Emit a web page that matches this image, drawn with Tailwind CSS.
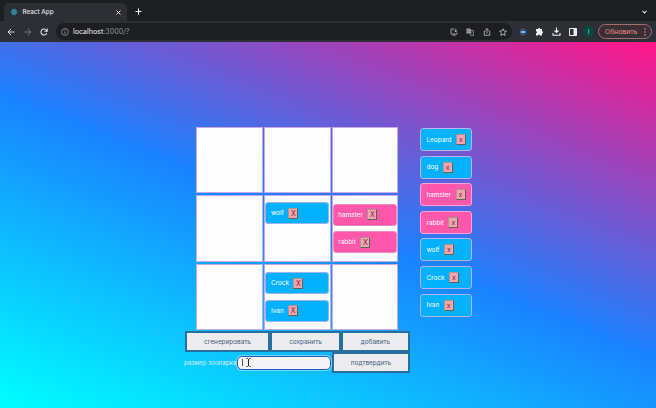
<!DOCTYPE html>
<html lang="ru">
<head>
<meta charset="utf-8">
<title>React App</title>
<script src="https://cdn.jsdelivr.net/npm/@tailwindcss/browser@4"></script>
</head>
<body class="w-[656px] h-[408px] overflow-hidden flex flex-col font-['Inter','Liberation_Sans',sans-serif] text-[6.4px] leading-none">
<header class="h-[42px] shrink-0 bg-[#1d1e22] text-[#e4e5e8]">
  <div class="h-[21px] flex items-end">
    <div class="relative ml-[4px] w-[123px] h-[18px] rounded-t-[5px] bg-[#2e2f34] flex items-center pl-[6px] pr-[6px]">
      <svg class="size-[8px] mr-[4.5px]" viewBox="0 0 16 16" fill="none" stroke="#3eaacb" stroke-width="1.2"><rect width="16" height="16" rx="3" fill="#20252b" stroke="none"/><ellipse cx="8" cy="8" rx="7" ry="2.8"/><ellipse cx="8" cy="8" rx="7" ry="2.8" transform="rotate(60 8 8)"/><ellipse cx="8" cy="8" rx="7" ry="2.8" transform="rotate(120 8 8)"/><circle cx="8" cy="8" r="1" fill="#3eaacb"/></svg>
      <span class="text-[6.3px] font-medium">React App</span>
      <svg class="size-[5px] ml-auto" viewBox="0 0 10 10" stroke="#eee" stroke-width="1.9"><path d="M1 1l8 8M9 1L1 9"/></svg>
    </div>
    <svg class="size-[7px] ml-[8px] mb-[6px]" viewBox="0 0 14 14" stroke="#f2f2f2" stroke-width="2.2"><path d="M7 1v12M1 7h12"/></svg>
    <svg class="w-[5px] h-[4px] ml-auto mr-[9px] mb-[7px]" viewBox="0 0 10 8" fill="none" stroke="#eee" stroke-width="2.2"><path d="M1 1.5l4 4.5 4-4.5"/></svg>
  </div>
  <div class="h-[21px] flex items-center bg-[#2e2f34]">
    <svg class="size-[8px] ml-[7px]" viewBox="0 0 16 16" fill="none" stroke="#e0e1e4" stroke-width="2"><path d="M15 8H2M8 2L2 8l6 6"/></svg>
    <svg class="size-[8px] ml-[9px]" viewBox="0 0 16 16" fill="none" stroke="#77787c" stroke-width="2"><path d="M1 8h13M8 2l6 6-6 6"/></svg>
    <svg class="size-[8px] ml-[8px]" viewBox="0 0 16 16" fill="none" stroke="#e0e1e4" stroke-width="2.1"><path d="M13.5 10.500A6 6 0 1 1 12.800 4.400L14 6M14.500 1v5.500H9"/></svg>
    <div class="ml-[8px] w-[456px] h-[17px] rounded-full bg-[#1d1e22] flex items-center pl-[5px] pr-[5px]">
      <svg class="size-[8px]" viewBox="0 0 16 16" fill="none" stroke="#a5a6aa" stroke-width="1.5"><circle cx="8" cy="8" r="6.800"/><path d="M8 7v5M8 4v1.600"/></svg>
      <span class="ml-[4px] text-[7.100px] text-[#919297]"><span class="text-[#eeeef0]">localhost</span>:3000/?</span>
      <div class="ml-auto flex items-center gap-[8.500px]">
        <svg class="size-[8px]" viewBox="0 0 16 16" fill="none" stroke="#c7c8cc" stroke-width="1.500"><path d="M8 2H2v10h12V9M5 14.500h6M11.500 1v7M8.500 5l3 3 3-3"/></svg>
        <svg class="size-[8px]" viewBox="0 0 16 16"><path d="M1 1h8l2 10H1z" fill="#a9aaae"/><path d="M8 5h7v10H9l-1-4" fill="none" stroke="#a9aaae" stroke-width="1.300"/><path d="M7.500 4.500A2.500 2.500 0 1 0 8 6.500H5.500M10 8h4M12 7v1c0 2-1 3-2.500 4M10.500 9l3 3" fill="none" stroke="#4c4d51" stroke-width="1"/></svg>
        <svg class="size-[8px]" viewBox="0 0 16 16" fill="none" stroke="#c7c8cc" stroke-width="1.500"><path d="M5 6H2.500v8.500h11V6H11M8 11V1M5 4l3-3 3 3"/></svg>
        <svg class="size-[8px]" viewBox="0 0 16 16" fill="none" stroke="#d0d1d5" stroke-width="1.500"><path d="M8 1.500l2 4.500 5 .5-3.800 3.300L12.300 15 8 12.300 3.700 15l1.100-5.200L1 6.500 6 6z"/></svg>
      </div>
    </div>
    <svg class="size-[8px] ml-[7px]" viewBox="0 0 16 16"><circle cx="8" cy="8" r="7" fill="#31516b"/><path d="M3 6h10v4H3z" fill="#35a3ed"/><path d="M6 7h5v2H6z" fill="#c7e9ff"/></svg>
    <svg class="size-[9px] ml-[8px]" viewBox="0 0 18 18" fill="#f1f1f3"><path d="M2 4h4a2.200 2.200 0 1 1 4.400 0H14v4.500a2.200 2.200 0 1 1 0 4.400V17H9.800a2 2 0 0 0-4 0H2v-4.500a2 2 0 0 0 0-4z"/></svg>
    <svg class="size-[9px] ml-[8px]" viewBox="0 0 18 18" fill="none" stroke="#eeeef0" stroke-width="2.200"><path d="M9 1v10M5 7l4 4 4-4M2 12v4.500h14V12"/></svg>
    <svg class="size-[8px] ml-[8px]" viewBox="0 0 16 16"><path d="M1 1h14v14H1z" fill="none" stroke="#eee" stroke-width="2"/><path d="M9 1h6v14H9z" fill="#eee"/></svg>
    <div class="size-[11px] ml-[6px] rounded-full bg-[#08493f] text-[#9ed2c6] text-[6px] flex items-center justify-center">I</div>
    <div class="ml-[4px] w-[54px] h-[15px] rounded-full border border-[#a56f70] bg-[#392f34] text-[#e98f8d] flex items-center pl-[6px] pr-[5px]">
      <span class="text-[6.800px] pt-px">Обновить</span>
      <svg class="w-[2px] h-[8px] ml-auto" viewBox="0 0 2 8" fill="#e98f8d"><circle cx="1" cy="1" r=".8"/><circle cx="1" cy="4" r=".8"/><circle cx="1" cy="7" r=".8"/></svg>
    </div>
  </div>
</header>

<main class="h-[366px] flex items-start pl-[184px] pt-[85px] text-white bg-[linear-gradient(22deg,#00ffff_0%,#1a82ff_50%,#ff1687_100%)]">
  <div class="w-[226px]">
    <div class="ml-[12px] grid grid-cols-[67px_67px_66px] grid-rows-[66px_67px_66px] gap-x-[1px] gap-y-[2px]">
      <div class="bg-[#fdfdfe] border border-[#c7a9e4]"></div>
      <div class="bg-[#fdfdfe] border border-[#c7a9e4]"></div>
      <div class="bg-[#fdfdfe] border border-[#c7a9e4]"></div>
      <div class="bg-[#fdfdfe] border border-[#c7a9e4]"></div>
      <div class="bg-[#fdfdfe] border border-[#c7a9e4] pt-[6px]">
        <div data-chip="wolf" class="mr-px h-[22px] rounded-[3px] border border-[#9cb3e8] bg-[#03b1ff] flex items-center pl-[5px] gap-[4.500px]"><span class="pt-px">wolf</span></div>
      </div>
      <div class="bg-[#fdfdfe] border border-[#c7a9e4] pt-[7.500px] flex flex-col gap-[5.500px]">
        <div data-chip="hamster" class="shrink-0 h-[22px] rounded-[3px] border border-[#f08ac4] bg-[#ff58aa] flex items-center pl-[4.300px] gap-[4.500px]"><span class="pt-px">hamster</span></div>
        <div data-chip="rabbit" class="shrink-0 h-[22px] rounded-[3px] border border-[#f08ac4] bg-[#ff58aa] flex items-center pl-[4.300px] gap-[4.500px]"><span class="pt-px">rabbit</span></div>
      </div>
      <div class="bg-[#fdfdfe] border border-[#c7a9e4]"></div>
      <div class="bg-[#fdfdfe] border border-[#c7a9e4] pt-[7px] flex flex-col gap-[5.500px]">
        <div data-chip="Crock" class="shrink-0 mr-px h-[22px] rounded-[3px] border border-[#9cb3e8] bg-[#03b1ff] flex items-center pl-[5px] gap-[4.500px]"><span class="pt-px">Crock</span></div>
        <div data-chip="Ivan" class="shrink-0 mr-px h-[22px] rounded-[3px] border border-[#9cb3e8] bg-[#03b1ff] flex items-center pl-[5px] gap-[4.500px]"><span class="pt-px">Ivan</span></div>
      </div>
      <div class="bg-[#fdfdfe] border border-[#c7a9e4]"></div>
    </div>
    <div class="ml-px mt-[1px] h-[21px] flex text-[#3f5c80]">
      <div class="w-[85px] border-2 border-[#286f99] bg-[#ececee] flex items-center justify-center pt-px">сгенерировать</div>
      <div class="w-[71px] border-2 border-[#286f99] bg-[#ececee] flex items-center justify-center pt-px">сохранить</div>
      <div class="w-[69px] border-2 border-[#286f99] bg-[#ececee] flex items-center justify-center pt-px">добавить</div>
    </div>
    <div class="h-[21px] flex items-center">
      <span class="w-[53px] whitespace-nowrap pt-px text-[6.300px] tracking-[-0.080px] text-[#d2f0ff]">размер зоопарка</span>
      <div class="w-[94px] h-[14px] rounded-[5px] border-[1.500px] border-[#1c5fba] ring-1 ring-[#bfe0ff]/60 bg-[#f4f4f6] flex items-center pl-[4px]">
        <span class="w-px h-[7px] bg-[#555]"></span>
        <svg class="w-[5px] h-[9px] ml-[3px]" viewBox="0 0 5 9" fill="none" stroke="#222" stroke-width="1"><path d="M.5.500h1l1 1 1-1h1M2.500 1v7M.5 8.500h1l1-1 1 1h1"/></svg>
      </div>
      <div class="ml-px w-[78px] h-[21px] border-2 border-[#286f99] bg-[#ececee] text-[#3f5c80] flex items-center justify-center pt-px">подтвердить</div>
    </div>
  </div>
  <div class="ml-[10px] mt-[1px] w-[52px] flex flex-col gap-[4.600px]">
    <div data-chip="Leopard" class="h-[23px] rounded-[3px] border border-[#b8b2e8] bg-[#03b1ff] flex items-center pl-[5.500px] gap-[4.500px]"><span class="pt-px">Leopard</span></div>
    <div data-chip="dog" class="h-[23px] rounded-[3px] border border-[#b8b2e8] bg-[#03b1ff] flex items-center pl-[5.500px] gap-[4.500px]"><span class="pt-px">dog</span></div>
    <div data-chip="hamster" class="h-[23px] rounded-[3px] border border-[#f3a4da] bg-[#ff58aa] flex items-center pl-[5.500px] gap-[4.500px]"><span class="pt-px">hamster</span></div>
    <div data-chip="rabbit" class="h-[23px] rounded-[3px] border border-[#f3a4da] bg-[#ff58aa] flex items-center pl-[5.500px] gap-[4.500px]"><span class="pt-px">rabbit</span></div>
    <div data-chip="wolf" class="h-[23px] rounded-[3px] border border-[#b8b2e8] bg-[#03b1ff] flex items-center pl-[5.500px] gap-[4.500px]"><span class="pt-px">wolf</span></div>
    <div data-chip="Crock" class="h-[23px] rounded-[3px] border border-[#b8b2e8] bg-[#03b1ff] flex items-center pl-[5.500px] gap-[4.500px]"><span class="pt-px">Crock</span></div>
    <div data-chip="Ivan" class="h-[23px] rounded-[3px] border border-[#b8b2e8] bg-[#03b1ff] flex items-center pl-[5.500px] gap-[4.500px]"><span class="pt-px">Ivan</span></div>
  </div>
</main>
<template id="remove"><span class="w-[10px] h-[11px] shrink-0 border border-t-[#a89a88] border-l-[#a89a88] border-r-[#56694f] border-b-[#56694f] bg-[#f5a3b2] text-[#7b2638] text-[7px] flex items-center justify-center"></span></template>
<script>
// Each animal chip gets its own remove button; board chips use a capital X.
document.querySelectorAll('[data-chip]').forEach(chip => {
  const button = document.getElementById('remove').content.firstElementChild.cloneNode(true);
  button.textContent = chip.closest('.grid') ? 'X' : 'x';
  chip.append(button);
});
</script>
</body>
</html>
